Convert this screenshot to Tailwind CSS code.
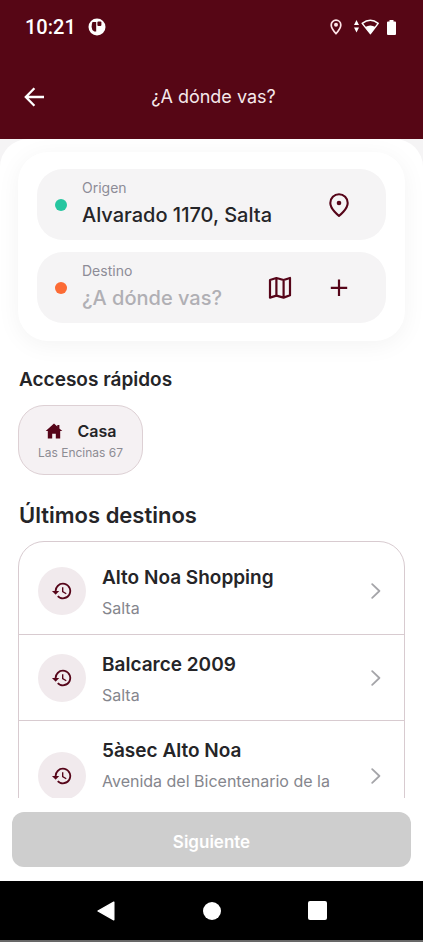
<!DOCTYPE html>
<html lang="es">
<head>
<meta charset="utf-8">
<meta name="viewport" content="width=device-width, initial-scale=1">
<title>¿A dónde vas?</title>
<script src="https://cdn.jsdelivr.net/npm/@tailwindcss/browser@4"></script>
</head>
<body class="h-screen bg-white font-[Inter,Roboto,sans-serif] text-[#252528]">
<svg class="hidden" aria-hidden="true">
  <symbol id="history" viewBox="0 0 24 24"><path fill="currentColor" d="M13 3a9 9 0 0 0-9 9H1l3.900 3.900.1.1L9 12H6a7 7 0 1 1 2.060 4.940l-1.420 1.420A9 9 0 1 0 13 3Zm-1 5v5l4.280 2.540.720-1.210-3.500-2.080V8H12Z"/></symbol>
  <symbol id="chevron" viewBox="0 0 10 16"><path fill="none" stroke="currentColor" stroke-width="1.8" stroke-linecap="round" stroke-linejoin="round" d="m1.200 1.200 7.200 6.800-7.200 6.800"/></symbol>
</svg>
<div class="flex h-full flex-col overflow-hidden">
  <header class="shrink-0 bg-[#560615] text-white">
    <div class="flex h-[54px] items-center justify-between pr-[27px] pl-[25px]">
      <div class="flex items-center gap-3">
        <span class="font-[Roboto,sans-serif] text-[20px] leading-6 font-medium">10:21</span>
        <svg class="size-[18px]" viewBox="0 0 18 18" aria-hidden="true"><circle cx="9" cy="9" r="8.500" fill="#fff"/><path d="M4.500 4h3.700v9.600H6.300Q3.600 12 3.600 9q0-3 .9-5Z" fill="#560615"/><rect x="9.400" y="3.600" width="4" height="4.400" rx="1" fill="#560615"/></svg>
      </div>
      <div class="flex items-center">
        <svg class="mr-3 h-4 w-3" viewBox="0 0 12 16" aria-hidden="true"><path d="M6 1.200A4.800 4.800 0 0 0 1.200 6C1.200 9.400 6 14.600 6 14.600S10.800 9.400 10.800 6A4.800 4.800 0 0 0 6 1.200Z" fill="none" stroke="#ffe4e8" stroke-width="1.700"/><circle cx="6" cy="5.800" r="2" fill="#ffe4e8"/></svg>
        <svg class="mr-2 h-4 w-[25px]" viewBox="0 0 25 16" aria-hidden="true"><path d="M2.500 1 5 6H0ZM2.500 13.500 5 8.500H0Z" fill="#fff"/><path d="M8.200 4.400Q16.400-2 24.200 4.400L16.400 14.600Z" fill="none" stroke="#fff" stroke-width="1.500" stroke-linejoin="round"/><path d="M11.200 8Q16.400 5 21.400 8L16.400 14.800Z" fill="#fff"/></svg>
        <svg class="h-[15px] w-[9px]" viewBox="0 0 9 15" aria-hidden="true"><path d="M2.500 0h4v1.500H8q1 0 1 1V14q0 1-1 1H1q-1 0-1-1V2.500q0-1 1-1h1.500Z" fill="#fff"/></svg>
      </div>
    </div>
    <div class="grid h-[85px] grid-cols-[70px_1fr_66px] items-center">
      <button type="button" aria-label="Volver" class="flex size-12 items-center pl-6">
        <svg class="size-5 shrink-0" viewBox="0 0 20 20" fill="none" stroke="#fff" stroke-width="2.300" aria-hidden="true"><path d="M20 10H2M10.400 1.200 1.800 10l8.600 8.800"/></svg>
      </button>
      <h1 class="text-center text-[18px] leading-6 font-normal text-[#f5e9eb]">¿A dónde vas?</h1>
    </div>
  </header>

  <div class="min-h-0 flex-1 bg-[#f5f4f5]">
    <main class="h-full overflow-hidden rounded-t-[28px] bg-white px-[18px] pt-[13px]">
      <form class="flex flex-col gap-3 rounded-[30px] bg-white px-[19px] pt-[17px] pb-[18px] shadow-[0_4px_24px_rgba(0,0,0,0.05)]">
        <div class="flex h-[71px] items-center rounded-[26px] bg-[#f5f4f5] pr-[35px] pl-[18px]">
          <span class="mr-[15px] size-3 shrink-0 rounded-full bg-[#26c6a0]"></span>
          <div class="flex min-w-0 flex-1 flex-col">
            <label for="origen" class="text-[14px] leading-5 text-[#8d8c97]">Origen</label>
            <input id="origen" type="text" value="Alvarado 1170, Salta" class="h-[34px] w-full bg-transparent text-[20px] font-medium outline-none">
          </div>
          <button type="button" aria-label="Ubicación actual" class="flex size-6 items-center justify-center text-[#560519]">
            <svg class="size-6" viewBox="0 0 24 24" fill="none" aria-hidden="true"><path d="M12 1.200A8.700 8.700 0 0 0 3.300 9.900C3.300 16.200 12 22.800 12 22.800S20.700 16.200 20.700 9.900A8.700 8.700 0 0 0 12 1.200Z" stroke="currentColor" stroke-width="2.100" stroke-linejoin="round"/><circle cx="12" cy="10" r="2.300" fill="currentColor"/></svg>
          </button>
        </div>
        <div class="flex h-[71px] items-center rounded-[26px] bg-[#f5f4f5] pr-[35px] pl-[18px]">
          <span class="mr-[15px] size-3 shrink-0 rounded-full bg-[#fc6b35]"></span>
          <div class="flex min-w-0 flex-1 flex-col">
            <label for="destino" class="text-[14px] leading-5 text-[#8d8c97]">Destino</label>
            <input id="destino" type="text" placeholder="¿A dónde vas?" class="h-[34px] w-full bg-transparent text-[20px] font-medium outline-none placeholder:text-[#b0afb4]">
          </div>
          <div class="flex items-center gap-[35px] text-[#560519]">
            <button type="button" aria-label="Elegir en el mapa" class="size-6">
              <svg class="size-6" viewBox="0 0 24 24" fill="none" stroke="currentColor" stroke-width="2.200" stroke-linejoin="round" aria-hidden="true"><path d="M2 4 8.400 2l7.200 2L22 2v17.200l-6.400 2.400-7.200-2L2 21.600ZM8.400 2v17.600M15.600 4v17.600"/></svg>
            </button>
            <button type="button" aria-label="Agregar parada" class="size-6">
              <svg class="size-6" viewBox="0 0 24 24" stroke="currentColor" stroke-width="2.200" aria-hidden="true"><path d="M12 3.600v16.400M3.800 11.800h16.400"/></svg>
            </button>
          </div>
        </div>
      </form>

      <section>
        <h2 class="mt-[27px] pl-px text-[19px] leading-6 font-semibold">Accesos rápidos</h2>
        <button type="button" class="mt-[13px] flex h-[70px] min-w-[125px] flex-col items-center justify-center rounded-[26px] border border-[#ddd0d4] bg-[#f5f1f3] px-[18px] pt-[2px]">
          <span class="flex items-center gap-[15px] text-[16px] leading-6 font-semibold">
            <svg class="h-4 w-[18px]" viewBox="0 0 18 16" aria-hidden="true"><path d="M9 .5.7 8h2.100v7.500h4.400v-4.800h3.600v4.800h4.400V8h2.100L14.400 5.400V2h-2.100v1.500Z" fill="#560519"/></svg>
            Casa
          </span>
          <span class="text-[12px] leading-5 text-[#8d8c93]">Las Encinas 67</span>
        </button>
      </section>

      <section>
        <h2 class="mt-[26px] pl-px text-[22px] leading-7 font-semibold">Últimos destinos</h2>
        <ul class="mt-3 rounded-t-[26px] border border-[#d8cbd0] pt-[6px]">
          <li class="border-b border-[#d8cbd0]">
            <a href="#" class="flex h-[86px] items-center pr-[23px] pl-[19px]">
              <span class="mr-4 flex size-12 shrink-0 items-center justify-center rounded-full bg-[#f1eaed] text-[#560519]"><svg class="size-[22px]" aria-hidden="true"><use href="#history"/></svg></span>
              <span class="flex min-w-0 flex-1 flex-col gap-[6px] self-start pt-[18px]"><span class="text-[19px] leading-6 font-semibold">Alto Noa Shopping</span><span class="text-[16px] leading-6 text-[#85868d]">Salta</span></span>
              <svg class="h-4 w-[10px] shrink-0 text-[#a5a5a9]" aria-hidden="true"><use href="#chevron"/></svg>
            </a>
          </li>
          <li class="border-b border-[#d8cbd0]">
            <a href="#" class="flex h-[85px] items-center pr-[23px] pl-[19px]">
              <span class="mr-4 flex size-12 shrink-0 items-center justify-center rounded-full bg-[#f1eaed] text-[#560519]"><svg class="size-[22px]" aria-hidden="true"><use href="#history"/></svg></span>
              <span class="flex min-w-0 flex-1 flex-col gap-[6px] self-start pt-[18px]"><span class="text-[19px] leading-6 font-semibold">Balcarce 2009</span><span class="text-[16px] leading-6 text-[#85868d]">Salta</span></span>
              <svg class="h-4 w-[10px] shrink-0 text-[#a5a5a9]" aria-hidden="true"><use href="#chevron"/></svg>
            </a>
          </li>
          <li>
            <a href="#" class="flex h-[110px] items-center pr-[23px] pl-[19px]">
              <span class="mr-4 flex size-12 shrink-0 items-center justify-center rounded-full bg-[#f1eaed] text-[#560519]"><svg class="size-[22px]" aria-hidden="true"><use href="#history"/></svg></span>
              <span class="flex min-w-0 flex-1 flex-col gap-[6px] self-start pt-[18px]"><span class="text-[19px] leading-6 font-semibold">5àsec Alto Noa</span><span class="text-[16px] leading-6 text-[#85868d]">Avenida del Bicentenario de la</span></span>
              <svg class="h-4 w-[10px] shrink-0 text-[#a5a5a9]" aria-hidden="true"><use href="#chevron"/></svg>
            </a>
          </li>
        </ul>
      </section>
    </main>
  </div>

  <div class="shrink-0 bg-white px-3 py-[14px]">
    <button type="button" class="h-[55px] w-full rounded-xl bg-[#cecece] pt-1 text-[17px] leading-6 font-semibold text-white">Siguiente</button>
  </div>

  <nav class="flex h-[61px] shrink-0 items-center justify-center gap-[87px] border-b-2 border-[#686868] bg-black pr-px">
    <button type="button" aria-label="Atrás" class="size-5"><svg class="size-5" viewBox="0 0 20 20" aria-hidden="true"><path d="M17.800 1.200v17.600L2 10Z" fill="#fff" stroke="#fff" stroke-width="1.400" stroke-linejoin="round"/></svg></button>
    <button type="button" aria-label="Inicio" class="size-[18px] rounded-full bg-white"></button>
    <button type="button" aria-label="Recientes" class="size-[19px] rounded-xs bg-white"></button>
  </nav>
</div>
</body>
</html>
